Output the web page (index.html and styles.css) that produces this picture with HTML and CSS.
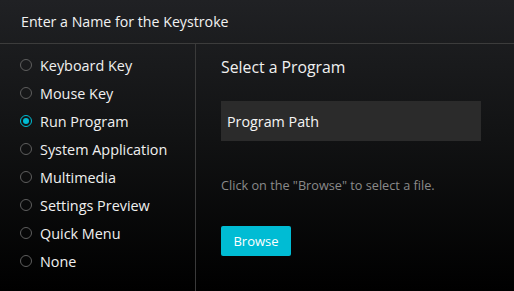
FILE: index.html
```html
<!DOCTYPE html>
<html lang="en">
<head>
    <meta charset="UTF-8">
    <title>Keystroke</title>
    <link rel="stylesheet" href="styles.css">
</head>
<body>
    <div class="panel">
        <header class="title">Enter a Name for the Keystroke</header>
        <div class="content">
            <ul class="options">
                <li class="option"><span class="radio"></span>Keyboard Key</li>
                <li class="option"><span class="radio"></span>Mouse Key</li>
                <li class="option checked"><span class="radio"></span>Run Program</li>
                <li class="option"><span class="radio"></span>System Application</li>
                <li class="option"><span class="radio"></span>Multimedia</li>
                <li class="option"><span class="radio"></span>Settings Preview</li>
                <li class="option"><span class="radio"></span>Quick Menu</li>
                <li class="option"><span class="radio"></span>None</li>
            </ul>
            <div class="detail">
                <h2 class="detail-title">Select a Program</h2>
                <div class="path">Program Path</div>
                <p class="hint">Click on the "Browse" to select a file.</p>
                <button class="browse">Browse</button>
            </div>
        </div>
    </div>
</body>
</html>
```
FILE: styles.css
```css
html, body {
    margin: 0;
    padding: 0;
    height: 100%;
}
body {
    font-family: 'Open Sans', 'Noto Sans', sans-serif;
    color: #ffffff;
    background: #000;
    overflow: hidden;
}
.panel {
    height: 291px;
    display: flex;
    flex-direction: column;
    background: linear-gradient(to bottom, #202124 0%, #121314 45%, #000000 100%);
}
.title {
    height: 44px;
    box-sizing: border-box;
    padding-left: 21px;
    display: flex;
    align-items: center;
    font-size: 14.2px;
    border-bottom: 1px solid #3c3c3c;
    color: #f2f2f2;
}
.content {
    flex: 1;
    display: flex;
}
.options {
    list-style: none;
    margin: 0;
    padding: 7px 0 0 20px;
    width: 196px;
    box-sizing: border-box;
    border-right: 1px solid #3a3a3a;
}
.option {
    height: 28px;
    display: flex;
    align-items: center;
    font-size: 14.4px;
    color: #f0f0f0;
}
.radio {
    width: 10px;
    height: 10px;
    border: 1.5px solid #5e5e5e;
    border-radius: 50%;
    margin-right: 8px;
    box-sizing: content-box;
    display: flex;
    align-items: center;
    justify-content: center;
}
.checked .radio {
    border-color: #00bcd4;
}
.checked .radio::after {
    content: "";
    width: 6px;
    height: 6px;
    border-radius: 50%;
    background: #00bcd4;
}
.detail {
    flex: 1;
    padding: 13px 0 0 25px;
}
.detail-title {
    margin: 0;
    font-weight: normal;
    font-size: 15.8px;
    line-height: 20px;
    color: #f0f0f0;
}
.path {
    margin-top: 24px;
    width: 260px;
    height: 40px;
    background: #2b2b2b;
    padding-left: 6px;
    box-sizing: border-box;
    display: flex;
    align-items: center;
    font-size: 14.3px;
    color: #f5f5f5;
}
.hint {
    margin: 36px 0 0;
    font-size: 12.7px;
    line-height: 16px;
    color: #8a8a8a;
}
.browse {
    margin-top: 33px;
    width: 70px;
    height: 30px;
    border: none;
    border-radius: 2px;
    background: #00bcd4;
    color: #ffffff;
    font-family: inherit;
    font-size: 13px;
    padding: 0;
}
```
